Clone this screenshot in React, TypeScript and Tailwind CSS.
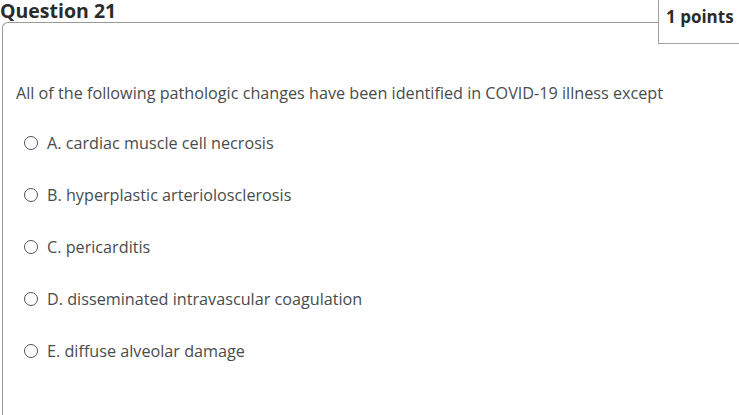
const options = [
  { letter: "A.", text: "cardiac muscle cell necrosis" },
  { letter: "B.", text: "hyperplastic arteriolosclerosis" },
  { letter: "C.", text: "pericarditis" },
  { letter: "D.", text: "disseminated intravascular coagulation" },
  { letter: "E.", text: "diffuse alveolar damage" },
];

export default function App() {
  return (
    <div
      className="relative w-[739px] h-[415px] overflow-hidden bg-white text-[#494c4e]"
      style={{ fontFamily: '"Open Sans", sans-serif' }}
    >
      {/* Header */}
      <h2 className="h-[22px] text-[19.5px] leading-[22px] font-bold text-[#2b2b2b]">
        Question 21
      </h2>

      {/* Points badge */}
      <div className="absolute top-0 right-0 w-[81px] h-[44px] bg-white border-l border-b border-[#a0a0a0] pl-[7px] pt-[5px]">
        <span className="text-[17px] leading-[22px] font-bold text-[#2b2b2b] whitespace-nowrap">
          1 points
        </span>
      </div>

      {/* Question box */}
      <div className="ml-[2px] mr-[81px] h-[400px] border-t border-l border-[#999] rounded-tl-[6px]">
        <div className="pl-[13px] pt-[59px]">
          <p className="text-[16.2px] leading-[22px] whitespace-nowrap">
            All of the following pathologic changes have been identified in COVID-19 illness except
          </p>

          <div className="mt-[28px] flex flex-col gap-[30px]">
            {options.map((o) => (
              <label key={o.letter} className="flex items-center h-[22px] pl-[8px]">
                <span className="w-[14px] h-[14px] rounded-full border border-[#555] bg-white shrink-0" />
                <span className="ml-[9px] text-[16.2px] leading-[22px]">
                  {o.letter} {o.text}
                </span>
              </label>
            ))}
          </div>
        </div>
      </div>
    </div>
  );
}
